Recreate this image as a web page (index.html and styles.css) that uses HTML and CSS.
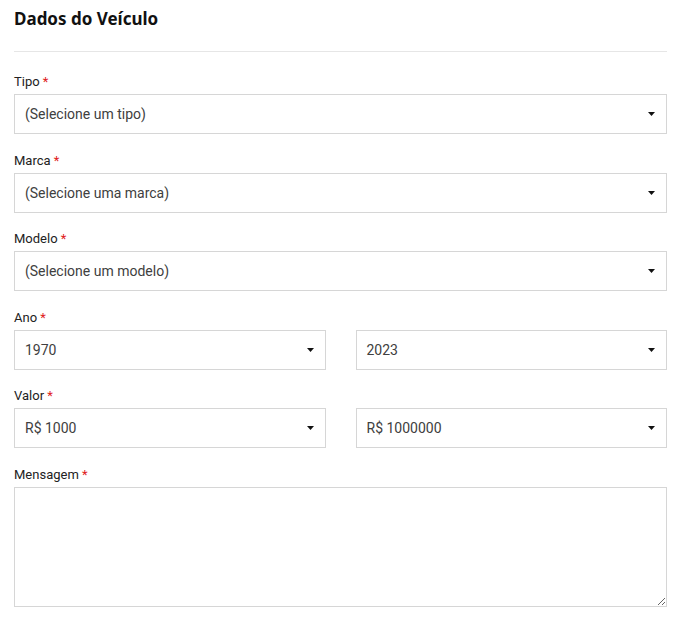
FILE: index.html
```html
<!DOCTYPE html>
<html lang="pt">
<head>
<meta charset="utf-8">
<link rel="stylesheet" href="styles.css">
</head>
<body>
<div class="form">
  <h2 class="title">Dados do Veículo</h2>
  <div class="field">
    <div class="label">Tipo <span class="req">*</span></div>
    <div class="select"><span>(Selecione um tipo)</span><svg class="arrow" width="7" height="4" viewBox="0 0 7 4"><path d="M0 0H7L3.5 4Z"/></svg></div>
  </div>
  <div class="field">
    <div class="label">Marca <span class="req">*</span></div>
    <div class="select"><span>(Selecione uma marca)</span><svg class="arrow" width="7" height="4" viewBox="0 0 7 4"><path d="M0 0H7L3.5 4Z"/></svg></div>
  </div>
  <div class="field">
    <div class="label">Modelo <span class="req">*</span></div>
    <div class="select"><span>(Selecione um modelo)</span><svg class="arrow" width="7" height="4" viewBox="0 0 7 4"><path d="M0 0H7L3.5 4Z"/></svg></div>
  </div>
  <div class="field">
    <div class="label">Ano <span class="req">*</span></div>
    <div class="pair">
      <div class="select"><span>1970</span><svg class="arrow" width="7" height="4" viewBox="0 0 7 4"><path d="M0 0H7L3.5 4Z"/></svg></div>
      <div class="select"><span>2023</span><svg class="arrow" width="7" height="4" viewBox="0 0 7 4"><path d="M0 0H7L3.5 4Z"/></svg></div>
    </div>
  </div>
  <div class="field">
    <div class="label">Valor <span class="req">*</span></div>
    <div class="pair">
      <div class="select"><span>R$ 1000</span><svg class="arrow" width="7" height="4" viewBox="0 0 7 4"><path d="M0 0H7L3.5 4Z"/></svg></div>
      <div class="select"><span>R$ 1000000</span><svg class="arrow" width="7" height="4" viewBox="0 0 7 4"><path d="M0 0H7L3.5 4Z"/></svg></div>
    </div>
  </div>
  <div class="field">
    <div class="label">Mensagem <span class="req">*</span></div>
    <textarea class="message"></textarea>
  </div>
</div>
</body>
</html>
```
FILE: styles.css
```css
html, body {
  margin: 0;
  padding: 0;
  background: #fff;
}
body {
  font-family: Roboto, "Liberation Sans", sans-serif;
  color: #333;
}
.form {
  padding: 6px 14px 0 14px;
}
.title {
  margin: 0;
  font-family: "Noto Sans", "Open Sans", sans-serif;
  font-weight: 700;
  font-size: 17px;
  line-height: 26px;
  color: #111;
  padding-bottom: 19px;
  border-bottom: 1px solid #e6e6e6;
  margin-bottom: 20px;
}
.field {
  margin-bottom: 16.5px;
}
.label {
  font-size: 13px;
  line-height: 20px;
  color: #222;
  margin-bottom: 2px;
}
.req {
  color: #e02020;
}
.select {
  height: 40px;
  box-sizing: border-box;
  border: 1px solid #d6d6d6;
  display: flex;
  align-items: center;
  justify-content: space-between;
  padding: 0 10px 0 10px;
  font-size: 14px;
  color: #404040;
  background: #fff;
}
.arrow {
  fill: #111;
  margin-right: 1px;
}
.pair {
  display: grid;
  grid-template-columns: 1fr 1fr;
  column-gap: 30px;
}
.message {
  display: block;
  width: 100%;
  height: 120px;
  box-sizing: border-box;
  border: 1px solid #d6d6d6;
  resize: vertical;
  font-family: Roboto, sans-serif;
  margin: 0;
}
```
